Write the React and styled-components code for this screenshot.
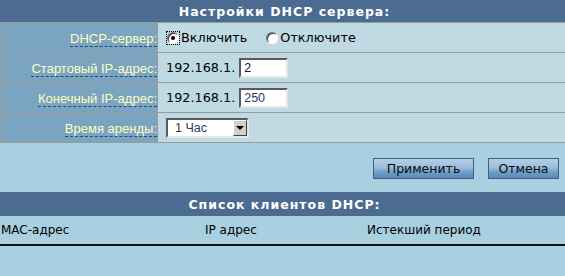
import React from "react";
import styled, { createGlobalStyle } from "styled-components";

const Global = createGlobalStyle`
  html, body { margin: 0; padding: 0; background: #a9d0e0; }
  body { font-family: "DejaVu Sans", Verdana, sans-serif; font-size: 12px; color: #000; }
`;

const Page = styled.div`
  width: 565px;
  background: #a9d0e0;
  overflow: hidden;
`;

const SectionHeader = styled.div`
  height: ${(p) => p.$h}px;
  background: #4b6b91;
  color: #fff;
  font-family: "DejaVu Sans", Verdana, sans-serif;
  font-weight: bold;
  font-size: 12.5px;
  letter-spacing: 1px;
  display: flex;
  align-items: center;
  justify-content: center;
  padding-left: ${(p) => p.$shift || 0}px;
`;

const FormTable = styled.table`
  width: 566px;
  border-collapse: collapse;
  table-layout: fixed;
`;

const Row = styled.tr`
  height: 30px;
`;

const LabelCell = styled.td`
  width: 156px;
  background: #7aa4bf;
  border: 1px solid #9a9a9a;
  text-align: right;
  padding: 0;
  vertical-align: middle;
`;

const Label = styled.span`
  font-family: "Liberation Sans", Arial, sans-serif;
  font-size: 13px;
  color: #ffffc0;
  border-bottom: 1px dashed #1c4c80;
  line-height: 15px;
  display: inline-block;
  margin-top: 2px;
`;

const ValueCell = styled.td`
  background: #c0dae3;
  border: 1px solid #9a9a9a;
  padding: 0 0 0 8px;
  vertical-align: middle;
`;

const Inline = styled.div`
  display: flex;
  align-items: center;
`;

const RadioOption = styled.label`
  display: flex;
  align-items: center;
  margin-right: ${(p) => p.$mr || 0}px;
  font-size: 12.8px;
`;

const RadioFocus = styled.span`
  display: inline-flex;
  padding: 1px;
  outline: ${(p) => (p.$focus ? "1px dotted #000" : "none")};
  outline-offset: -1px;
  margin-right: 1px;
`;

const RadioCircle = styled.span`
  width: 12px;
  height: 12px;
  box-sizing: border-box;
  border-radius: 50%;
  background: #fff;
  border: 1px solid;
  border-color: #6d6d6d #fff #fff #6d6d6d;
  box-shadow: inset 1px 1px 0 #3a3a3a;
  display: flex;
  align-items: center;
  justify-content: center;
  &::after {
    content: "";
    width: 4px;
    height: 4px;
    border-radius: 50%;
    background: ${(p) => (p.$checked ? "#000" : "transparent")};
  }
`;

const Prefix = styled.span`
  font-size: 12.8px;
  margin-right: 4px;
`;

const TextInput = styled.div`
  width: 49px;
  height: 20px;
  box-sizing: border-box;
  background: #fff;
  border: 2px solid;
  border-color: #5a5a5a #e6e6e6 #e6e6e6 #5a5a5a;
  font-family: "Liberation Sans", Arial, sans-serif;
  font-size: 12.5px;
  color: ${(p) => p.$color || "#1a2a50"};
  padding: 0 0 0 3px;
  line-height: 16px;
`;

const Select = styled.div`
  width: 83px;
  height: 20px;
  box-sizing: border-box;
  background: #fff;
  border: 2px solid;
  border-color: #5a5a5a #e6e6e6 #e6e6e6 #5a5a5a;
  display: flex;
  align-items: stretch;
  font-family: "Liberation Sans", Arial, sans-serif;
  font-size: 12.5px;
  color: #2b3a5c;
`;

const SelectValue = styled.span`
  flex: 1;
  padding-left: 7px;
  line-height: 16px;
`;

const SelectArrow = styled.span`
  width: 14px;
  background: #d4d0c8;
  border-left: 1px solid #fff;
  border-top: 1px solid #fff;
  border-right: 1px solid #404040;
  border-bottom: 1px solid #404040;
  box-sizing: border-box;
  display: flex;
  align-items: center;
  justify-content: center;
  &::after {
    content: "";
    border-left: 4px solid transparent;
    border-right: 4px solid transparent;
    border-top: 4px solid #000;
    margin-top: 1px;
  }
`;

const ButtonBar = styled.div`
  display: flex;
  justify-content: flex-end;
  gap: 14px;
  padding: 15px 6px 0 0;
  height: 34px;
`;

const Button = styled.button`
  width: ${(p) => p.$w}px;
  height: 21px;
  box-sizing: border-box;
  border: 1px solid #3a5f8c;
  background: linear-gradient(#b3cfe6 0%, #9bbedc 45%, #6d9cc6 70%, #5a8cba 100%);
  font-family: "DejaVu Sans", Verdana, sans-serif;
  font-size: 12.5px;
  color: #0a0a0a;
  padding: 0;
  cursor: pointer;
`;

const ClientsHeader = styled.div`
  display: grid;
  grid-template-columns: 204px 162px 1fr;
  height: 28px;
  align-items: center;
  border-bottom: 2px solid #111;
  font-size: 12px;
  padding-left: 1px;
`;

const ColTitle = styled.span``;

export default function App() {
  return (
    <Page>
      <Global />
      <SectionHeader $h={22} $shift={4}>Настройки DHCP сервера:</SectionHeader>
      <FormTable>
        <tbody>
          <Row>
            <LabelCell>
              <Label>DHCP-сервер:</Label>
            </LabelCell>
            <ValueCell>
              <Inline>
                <RadioOption $mr={18}>
                  <RadioFocus $focus>
                    <RadioCircle $checked />
                  </RadioFocus>
                  Включить
                </RadioOption>
                <RadioOption>
                  <RadioFocus>
                    <RadioCircle />
                  </RadioFocus>
                  Отключите
                </RadioOption>
              </Inline>
            </ValueCell>
          </Row>
          <Row>
            <LabelCell>
              <Label>Стартовый IP-адрес:</Label>
            </LabelCell>
            <ValueCell>
              <Inline>
                <Prefix>192.168.1.</Prefix>
                <TextInput $color="#101830">2</TextInput>
              </Inline>
            </ValueCell>
          </Row>
          <Row>
            <LabelCell>
              <Label>Конечный IP-адрес:</Label>
            </LabelCell>
            <ValueCell>
              <Inline>
                <Prefix>192.168.1.</Prefix>
                <TextInput $color="#2b3a66">250</TextInput>
              </Inline>
            </ValueCell>
          </Row>
          <Row>
            <LabelCell>
              <Label>Время аренды:</Label>
            </LabelCell>
            <ValueCell>
              <Inline>
                <Select>
                  <SelectValue>1 Час</SelectValue>
                  <SelectArrow />
                </Select>
              </Inline>
            </ValueCell>
          </Row>
        </tbody>
      </FormTable>
      <ButtonBar>
        <Button $w={101}>Применить</Button>
        <Button $w={71}>Отмена</Button>
      </ButtonBar>
      <SectionHeader $h={24} $shift={4}>Список клиентов DHCP:</SectionHeader>
      <ClientsHeader>
        <ColTitle>MAC-адрес</ColTitle>
        <ColTitle>IP адрес</ColTitle>
        <ColTitle>Истекший период</ColTitle>
      </ClientsHeader>
    </Page>
  );
}
